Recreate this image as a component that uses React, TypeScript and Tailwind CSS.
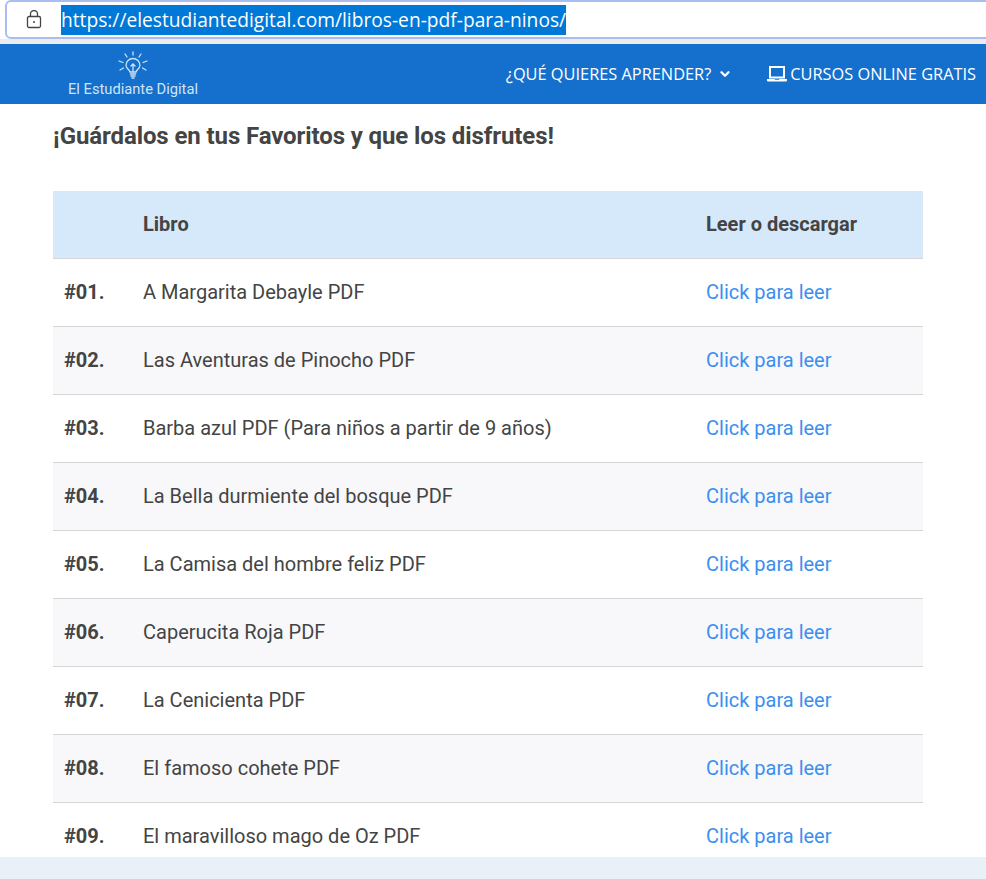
import { ChevronDown } from "lucide-react";

const books = [
  "A Margarita Debayle PDF",
  "Las Aventuras de Pinocho PDF",
  "Barba azul PDF (Para niños a partir de 9 años)",
  "La Bella durmiente del bosque PDF",
  "La Camisa del hombre feliz PDF",
  "Caperucita Roja PDF",
  "La Cenicienta PDF",
  "El famoso cohete PDF",
  "El maravilloso mago de Oz PDF",
];

function Bulb() {
  return (
    <svg width="32" height="30" viewBox="0 0 32 30" fill="none" stroke="#cfe4f7" strokeWidth="1.300" strokeLinecap="round">
      <path d="M13 21c-.4-2-3.600-3.500-4-6.500a7 7 0 1 1 14 0c-.4 3-3.600 4.500-4 6.500z" />
      <path d="M13.500 23h5M14 25h4M15 27h2" strokeWidth="1.500" />
      <path d="M16 20v-6M14 15l2-2 2 2" />
      <path d="M16 1v3M8 3l2 3M24 3l-2 3M2 10l4 1.500M30 10l-4 1.500M3 19l3.500-2M29 19l-3.500-2" />
    </svg>
  );
}

export default function App() {
  return (
    <div className="flex h-[879px] w-[986px] flex-col overflow-hidden bg-white font-['Roboto',sans-serif] text-[20px] text-[#444444]">
      <div className="-mr-[8px] ml-[5px] flex h-[39px] shrink-0 items-center rounded-[6px] border-2 border-[#a9bdf0] bg-white pl-[19px]">
        <svg width="16" height="19" viewBox="0 0 16 19" fill="none" stroke="#444" strokeWidth="1.300" className="shrink-0">
          <rect x="1.500" y="6.500" width="13" height="11" rx="1.500" />
          <path d="M4.500 6.500V4a3.500 3.500 0 0 1 7 0v2.500" />
          <circle cx="8" cy="12" r="1" fill="#444" stroke="none" />
        </svg>
        <span className="ml-[19px] flex h-[30px] items-center bg-[#0078d7] font-['Open_Sans',sans-serif] text-[19.2px] leading-none text-white">
          https://elestudiantedigital.com/libros-en-pdf-para-ninos/
        </span>
      </div>
      <div className="h-[5px] shrink-0 bg-[#ececec]" />
      <header className="flex h-[60px] shrink-0 items-center justify-between bg-[#1470cc] pl-[68px] pr-[10px] text-white">
        <div className="flex flex-col items-center">
          <Bulb />
          <span className="text-[14.7px] leading-[16px] text-[#cfe4f7]">El Estudiante Digital</span>
        </div>
        <nav className="flex items-center font-['Open_Sans',sans-serif] text-[16.35px]">
          <span>¿QUÉ QUIERES APRENDER?</span>
          <ChevronDown size={14} strokeWidth={4} className="ml-[7px]" />
          <svg width="20" height="16" viewBox="0 0 20 16" className="ml-[35px]" fill="none" stroke="currentColor">
            <rect x="3" y="1" width="14" height="10.500" strokeWidth="2" />
            <path d="M0 13h7.500l.5.800h4l.5-.8H20v1.500a1 1 0 0 1-1 1H1a1 1 0 0 1-1-1z" fill="currentColor" stroke="none" />
          </svg>
          <span className="ml-[3px]">CURSOS ONLINE GRATIS</span>
        </nav>
      </header>
      <main className="min-h-0 flex-1 overflow-hidden pl-[53px] pr-[63px]">
        <h2 className="mt-[17px] text-[24px] font-bold leading-[30px] tracking-[-0.1px] text-[#444444]">
          ¡Guárdalos en tus Favoritos y que los disfrutes!
        </h2>
        <table className="mt-[40px] w-[870px] table-fixed border-collapse">
          <thead>
            <tr className="h-[67px] border-b border-[#d6d6d6] bg-[#d6e9fa] text-left">
              <th className="w-[90px]" />
              <th className="w-[563px] font-bold">Libro</th>
              <th className="font-bold">Leer o descargar</th>
            </tr>
          </thead>
          <tbody>
            {books.map((b, i) => (
              <tr key={b} className={`h-[68px] border-b border-[#d6d6d6] ${i % 2 === 1 ? "bg-[#f8f8fb]" : "bg-white"}`}>
                <td className="pl-[11px] font-bold">#0{i + 1}.</td>
                <td>{b}</td>
                <td className="text-[#3b8fef]">Click para leer</td>
              </tr>
            ))}
          </tbody>
        </table>
      </main>
      <div className="h-[22px] shrink-0 bg-[#eaf0f7]" />
    </div>
  );
}
